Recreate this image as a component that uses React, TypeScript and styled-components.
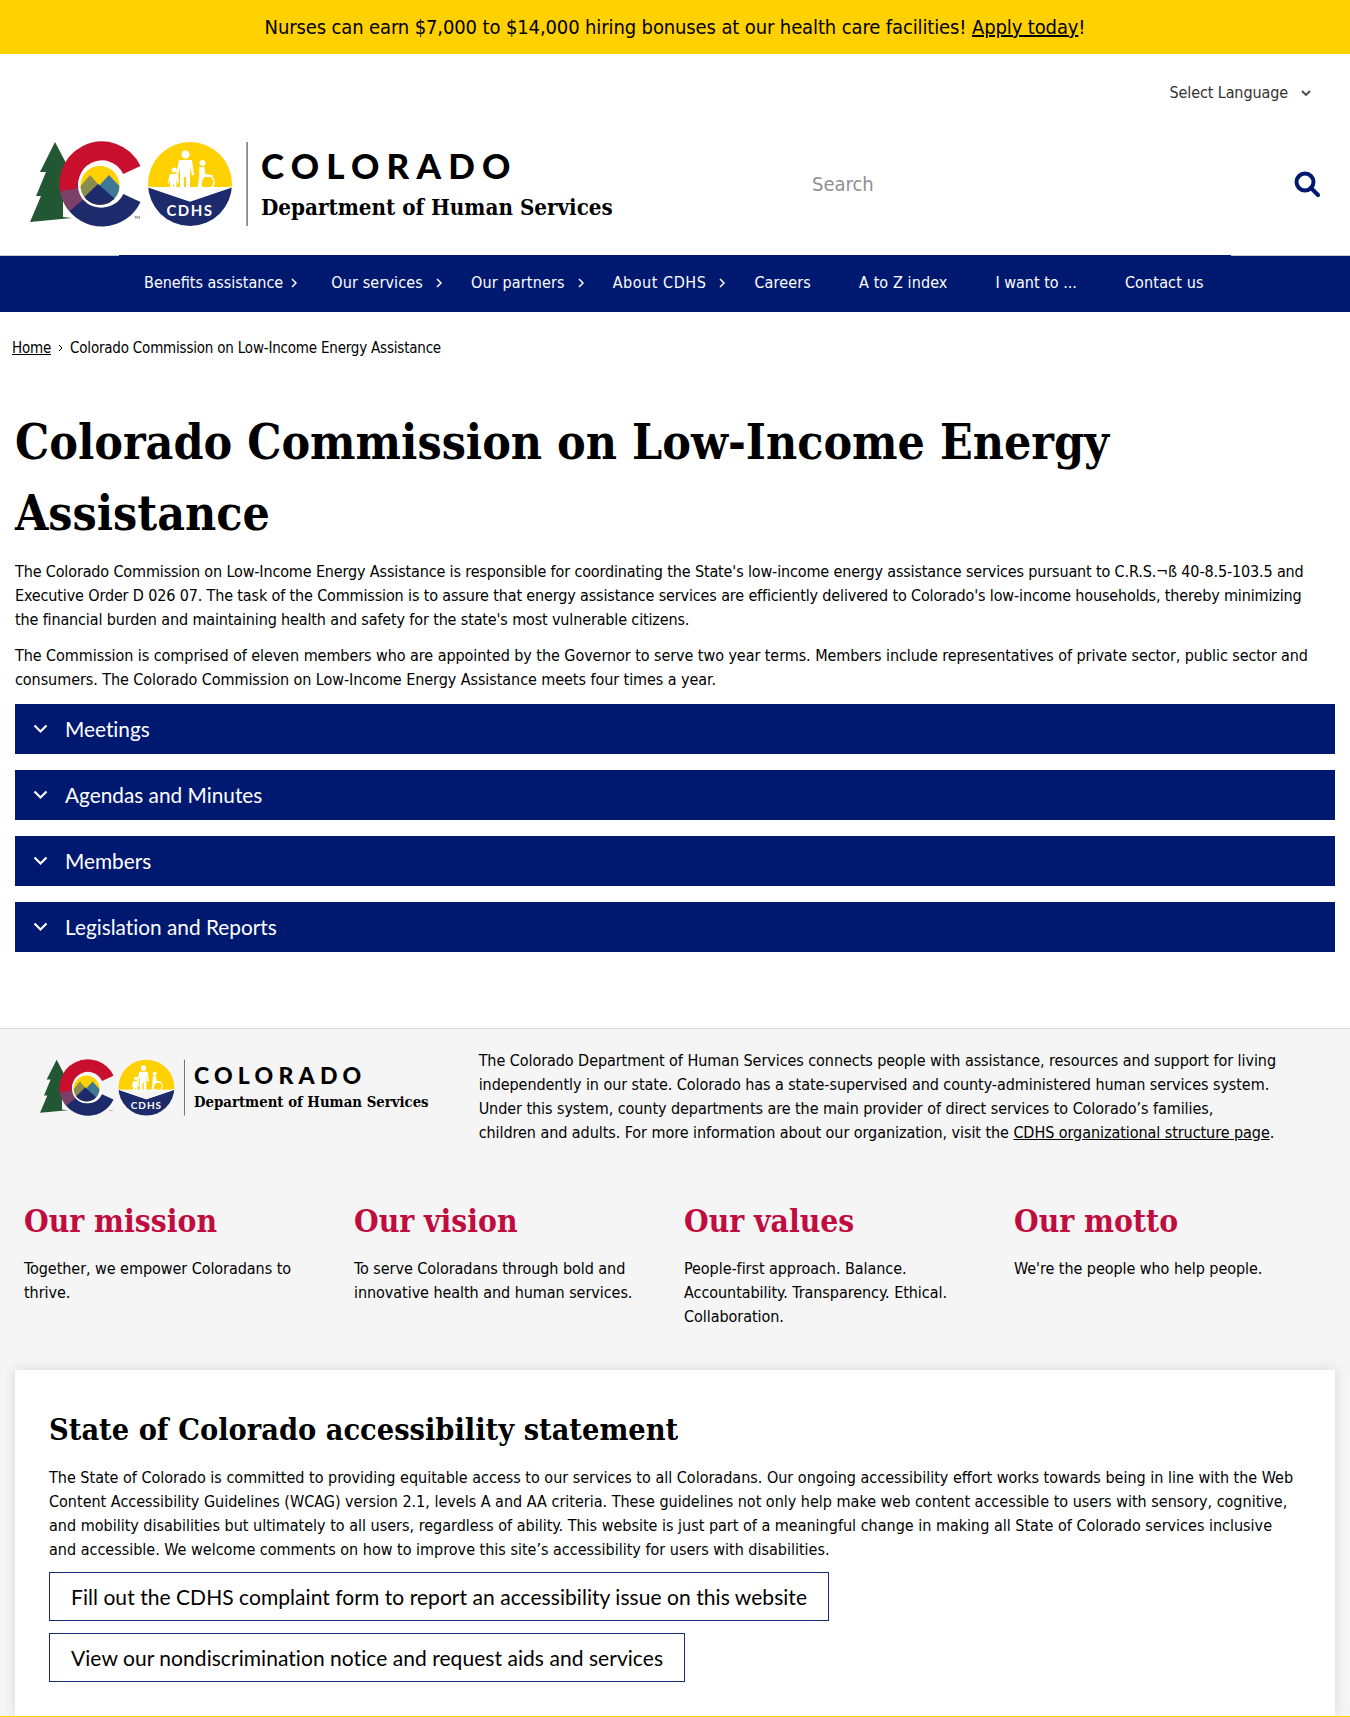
import styled, { createGlobalStyle } from 'styled-components'

const navy = '#001970'
const bodyFont = '"DejaVu Sans Condensed", "DejaVu Sans", sans-serif'
const labelFont = 'Lato, "Open Sans", sans-serif'
const slabFont = '"DejaVu Serif Condensed", "DejaVu Serif", serif'

const GlobalStyle = createGlobalStyle`
  html, body {
    margin: 0;
    padding: 0;
    background: #fff;
    color: #000;
    font-family: ${bodyFont};
    font-size: 16px;
    line-height: 24px;
  }
  a { color: inherit; }
`

const Page = styled.div`
  width: 1350px;
  height: 1717px;
  overflow: hidden;
`

const AlertBanner = styled.div`
  height: 54px;
  background: #ffd100;
  display: flex;
  align-items: center;
  justify-content: center;
  font-size: 20px;
  letter-spacing: -0.12px;
`

const LanguageRow = styled.div`
  height: 64px;
  box-sizing: border-box;
  padding: 14px 39px 0 0;
  display: flex;
  align-items: center;
  justify-content: flex-end;
  gap: 13px;
  color: #333;
  letter-spacing: -0.1px;
`

const HeaderRow = styled.header`
  height: 137px;
  box-sizing: border-box;
  display: flex;
  align-items: center;
  justify-content: space-between;
  padding: 0 30px 5px;
`

const LogoWrap = styled.div<{ $small?: boolean }>`
  display: flex;
  align-items: center;
  gap: ${p => (p.$small ? 9 : 13)}px;
  flex: none;
  padding-top: ${p => (p.$small ? 10 : 0)}px;
`

const LogoWords = styled.div<{ $small?: boolean }>`
  display: flex;
  flex-direction: column;
  gap: ${p => (p.$small ? 7 : 13)}px;
`

const StateName = styled.div<{ $small?: boolean }>`
  font-family: ${labelFont};
  font-weight: 900;
  font-size: ${p => (p.$small ? 23 : 35)}px;
  line-height: ${p => (p.$small ? 22 : 32)}px;
  letter-spacing: ${p => (p.$small ? 5.2 : 7.2)}px;
`

const AgencyName = styled.div<{ $small?: boolean }>`
  font-family: ${slabFont};
  font-weight: 700;
  font-size: ${p => (p.$small ? 14.8 : 22.2)}px;
  line-height: ${p => (p.$small ? 18 : 26)}px;
  white-space: nowrap;
`

const SearchBox = styled.div`
  width: 508px;
  display: flex;
  align-items: center;
  justify-content: space-between;
  font-size: 20px;
  color: #909090;
`

const NavBar = styled.nav`
  height: 57px;
  box-sizing: border-box;
  border-top: 1px solid;
  border-image: linear-gradient(to right, #c9c9d4 120px, ${navy} 120px, ${navy} 1230px, #c9c9d4 1230px) 1;
  background: ${navy};
  display: flex;
  align-items: center;
  gap: 48px;
  padding: 0 0 2px 144px;
  color: #fff;
`

const NavItem = styled.div<{ $tracking: number }>`
  display: flex;
  align-items: center;
  white-space: nowrap;
  letter-spacing: ${p => p.$tracking}px;
`

const NavChevron = styled.svg<{ $offset: number }>`
  width: 6px;
  height: 10px;
  flex: none;
  margin-left: ${p => p.$offset}px;
  margin-right: -${p => p.$offset + 6}px;
`

const Breadcrumb = styled.div`
  height: 24px;
  margin-top: 24px;
  padding-left: 12px;
  font-size: 15px;
  letter-spacing: -0.2px;
  display: flex;
  align-items: center;
  gap: 7px;
`

const Content = styled.main`
  padding: 0 15px;
`

const PageTitle = styled.h1`
  margin: 47px 0 11px;
  font-family: ${slabFont};
  font-weight: 700;
  font-size: 47.8px;
  line-height: 71px;
`

const Para = styled.p<{ $tracking?: number; $maxWidth?: number }>`
  margin: 0 0 12px;
  letter-spacing: ${p => p.$tracking ?? 0}px;
  max-width: ${p => (p.$maxWidth ? `${p.$maxWidth}px` : 'none')};
`

const Accordion = styled.div`
  display: flex;
  flex-direction: column;
  gap: 16px;
  margin-top: 10px;
`

const AccordionHead = styled.div`
  height: 50px;
  background: ${navy};
  color: #fff;
  display: flex;
  align-items: center;
  gap: 17px;
  padding-left: 18px;
  font-family: ${labelFont};
  font-size: 20.8px;
  font-variant-ligatures: none;
`

const Footer = styled.footer`
  margin-top: 76px;
  border-top: 1px solid #ddd;
  background: #f5f5f5;
  height: 691px;
`

const FooterIntro = styled.div`
  display: flex;
  align-items: flex-start;
  padding: 20px 0 0 40px;
  height: 168px;
  box-sizing: border-box;
`

const FooterAbout = styled.div`
  margin-left: 50px;
  width: 830px;
  letter-spacing: -0.06px;
`

const Columns = styled.div`
  display: grid;
  grid-template-columns: repeat(4, 330px);
  padding-left: 24px;
  height: 173px;
`

const ColumnTitle = styled.h2`
  margin: 0 0 12px;
  font-family: ${slabFont};
  font-weight: 700;
  font-size: 31.5px;
  line-height: 48px;
  color: #c00c3e;
`

const ColumnText = styled.p`
  margin: 0;
  width: 285px;
  letter-spacing: -0.05px;
`

const StatementCard = styled.section`
  margin: 0 15px;
  height: 346px;
  box-sizing: border-box;
  padding: 35px 34px 0;
  background: #fff;
  box-shadow: 0 0 12px rgba(0, 0, 0, 0.12);
`

const StatementTitle = styled.h2`
  margin: 0 0 13px;
  font-family: ${slabFont};
  font-weight: 700;
  font-size: 30.4px;
  line-height: 48px;
`

const StatementText = styled.p`
  margin: 0 0 10px;
`

const StatementLink = styled.div`
  display: table;
  padding: 0 21px;
  height: 49px;
  line-height: 47px;
  box-sizing: border-box;
  border: 1px solid #1b2a78;
  font-family: ${labelFont};
  font-size: 21px;
  letter-spacing: 0.05px;
  font-variant-ligatures: none;

  & + & {
    margin-top: 12px;
  }
`

const BottomRule = styled.div`
  height: 2px;
  background: #ffd100;
`

const LogoMark = ({ width }: { width: number }) => (
  <svg width={width} viewBox="0 0 218 86">
    <defs>
      <clipPath id="sun"><circle cx="70" cy="44.5" r="19.5" /></clipPath>
      <clipPath id="seal"><circle cx="160" cy="43" r="42" /></clipPath>
    </defs>
    <polygon points="25,1 36,22 33,30 33,76 42,77 0,81 11,55 6,55 16,31 10,31" fill="#215732" />
    <path d="M101.9 29.1A33 33 0 1 0 43.4 59.5" fill="none" stroke="#c8102e" strokeWidth="19" />
    <path d="M43.4 59.5A33 33 0 0 0 101.9 56.9" fill="none" stroke="#1d2a6b" strokeWidth="19" />
    <path d="M39.5 48.7A33 33 0 0 0 46.7 64.2" fill="none" stroke="#7b4068" strokeWidth="19" />
    <circle cx="70" cy="44.5" r="22" fill="#fff" />
    <g clipPath="url(#sun)">
      <rect x="48" y="22" width="44" height="44" fill="#ffd100" />
      <polygon points="60,34 48,48 48,64 74,50" fill="#8a8d4f" />
      <polygon points="79,34 64,50 92,62 92,48" fill="#3f7896" />
      <polygon points="68,43 44,66 94,66" fill="#1d2a6b" />
    </g>
    <text x="104" y="78" fontSize="4" fontFamily="Lato, sans-serif" fill="#333">TM</text>
    <g clipPath="url(#seal)">
      <rect x="116" y="0" width="88" height="46" fill="#ffd100" />
      <polygon points="116,45 160,60 204,45 204,86 116,86" fill="#1d2a6b" />
      <polyline points="116,45 160,60 204,45" fill="none" stroke="#fff" strokeWidth="1.5" />
    </g>
    <g fill="#fff">
      <circle cx="155.5" cy="13.500" r="4" />
      <path d="M149 19h13l2 15-2 .5-2-8v23h-4V36h-2v13.500h-4V26.500l-2 8-2-.5z" />
      <circle cx="144.3" cy="29" r="2.6" />
      <path d="M140 33h8l1 9-1.500 .5-1-5v12h-2.500v-6h-1v6H140V37.500l-1 5-1.500-.5z" />
      <circle cx="172.500" cy="22" r="3" />
      <path d="M169.500 26h5l1 8 5 0 2 0 0 2-8 0-2 3-3 10h-2.500l2-11z" />
    </g>
    <circle cx="177" cy="41" r="7" fill="none" stroke="#fff" strokeWidth="1.5" />
    <text x="160" y="75" textAnchor="middle" fontSize="15" fontWeight="700" letterSpacing="1.5" fontFamily="Lato, sans-serif" fill="#fff">CDHS</text>
    <rect x="216.500" y="1" width="1.200" height="84" fill="#555" />
  </svg>
)

const Logo = ({ small }: { small?: boolean }) => (
  <LogoWrap $small={small}>
    <LogoMark width={small ? 145 : 218} />
    <LogoWords $small={small}>
      <StateName $small={small}>COLORADO</StateName>
      <AgencyName $small={small}>Department of Human Services</AgencyName>
    </LogoWords>
  </LogoWrap>
)

const SearchIcon = () => (
  <svg width="26" height="26" viewBox="0 0 26 26" fill="none" stroke={navy} strokeWidth="4">
    <circle cx="11" cy="11" r="8.500" />
    <line x1="17" y1="17" x2="24" y2="24" strokeLinecap="round" />
  </svg>
)

const navLinks = [
  { label: 'Benefits assistance', offset: 8, tracking: 0 },
  { label: 'Our services', offset: 13, tracking: 0.15 },
  { label: 'Our partners', offset: 13, tracking: 0.15 },
  { label: 'About CDHS', offset: 13, tracking: 0.55 },
  { label: 'Careers', tracking: 0.15 },
  { label: 'A to Z index', tracking: 0.1 },
  { label: 'I want to ...', tracking: 0 },
  { label: 'Contact us', tracking: 0.15 },
]

const sections = ['Meetings', 'Agendas and Minutes', 'Members', 'Legislation and Reports']

const columns = [
  { title: 'Our mission', text: 'Together, we empower Coloradans to thrive.' },
  { title: 'Our vision', text: 'To serve Coloradans through bold and innovative health and human services.' },
  { title: 'Our values', text: 'People-first approach. Balance. Accountability. Transparency. Ethical. Collaboration.' },
  { title: 'Our motto', text: "We're the people who help people." },
]

export default function App() {
  return (
    <Page>
      <GlobalStyle />
      <AlertBanner>
        <span>Nurses can earn $7,000 to $14,000 hiring bonuses at our health care facilities! <a href="#apply">Apply today</a>!</span>
      </AlertBanner>
      <LanguageRow>
        <span>Select Language</span>
        <svg width="10" height="7" viewBox="0 0 10 7" fill="none" stroke="#444" strokeWidth="1.800"><path d="M1 1l4 4 4-4" /></svg>
      </LanguageRow>
      <HeaderRow>
        <Logo />
        <SearchBox>
          <span>Search</span>
          <SearchIcon />
        </SearchBox>
      </HeaderRow>
      <NavBar>
        {navLinks.map(link => (
          <NavItem key={link.label} $tracking={link.tracking}>
            {link.label}
            {link.offset && (
              <NavChevron $offset={link.offset} viewBox="0 0 6 10" fill="none" stroke="#fff" strokeWidth="1.500">
                <path d="M1 1l4 4-4 4" />
              </NavChevron>
            )}
          </NavItem>
        ))}
      </NavBar>
      <Breadcrumb>
        <a href="#home">Home</a>
        <svg width="5" height="8" viewBox="0 0 5 8" fill="none" stroke="#000" strokeWidth="1"><path d="M1 1l3 3-3 3" /></svg>
        <span>Colorado Commission on Low-Income Energy Assistance</span>
      </Breadcrumb>
      <Content>
        <PageTitle>Colorado Commission on Low-Income Energy Assistance</PageTitle>
        <Para $tracking={-0.14} $maxWidth={1310}>The Colorado Commission on Low-Income Energy Assistance is responsible for coordinating the State's low-income energy assistance services pursuant to C.R.S.¬ß 40-8.5-103.5 and Executive Order D 026 07. The task of the Commission is to assure that energy assistance services are efficiently delivered to Colorado's low-income households, thereby minimizing the financial burden and maintaining health and safety for the state's most vulnerable citizens.</Para>
        <Para $tracking={-0.06}>The Commission is comprised of eleven members who are appointed by the Governor to serve two year terms. Members include representatives of private sector, public sector and consumers. The Colorado Commission on Low-Income Energy Assistance meets four times a year.</Para>
        <Accordion>
          {sections.map(name => (
            <AccordionHead key={name}>
              <svg width="15" height="10" viewBox="0 0 15 10" fill="none" stroke="#fff" strokeWidth="2.200"><path d="M1.500 1.500l6 6 6-6" /></svg>
              {name}
            </AccordionHead>
          ))}
        </Accordion>
      </Content>
      <Footer>
        <FooterIntro>
          <Logo small />
          <FooterAbout>
            The Colorado Department of Human Services connects people with assistance, resources and support for living independently in our state. Colorado has a state-supervised and county-administered human services system. Under this system, county departments are the main provider of direct services to Colorado’s families,<br />children and adults. For more information about our organization, visit the <a href="#structure">CDHS organizational structure page</a>.
          </FooterAbout>
        </FooterIntro>
        <Columns>
          {columns.map(col => (
            <div key={col.title}>
              <ColumnTitle>{col.title}</ColumnTitle>
              <ColumnText>{col.text}</ColumnText>
            </div>
          ))}
        </Columns>
        <StatementCard>
          <StatementTitle>State of Colorado accessibility statement</StatementTitle>
          <StatementText>The State of Colorado is committed to providing equitable access to our services to all Coloradans. Our ongoing accessibility effort works towards being in line with the Web Content Accessibility Guidelines (WCAG) version 2.1, levels A and AA criteria. These guidelines not only help make web content accessible to users with sensory, cognitive, and mobility disabilities but ultimately to all users, regardless of ability. This website is just part of a meaningful change in making all State of Colorado services inclusive and accessible. We welcome comments on how to improve this site’s accessibility for users with disabilities.</StatementText>
          <StatementLink>Fill out the CDHS complaint form to report an accessibility issue on this website</StatementLink>
          <StatementLink>View our nondiscrimination notice and request aids and services</StatementLink>
        </StatementCard>
        <BottomRule />
      </Footer>
    </Page>
  )
}
